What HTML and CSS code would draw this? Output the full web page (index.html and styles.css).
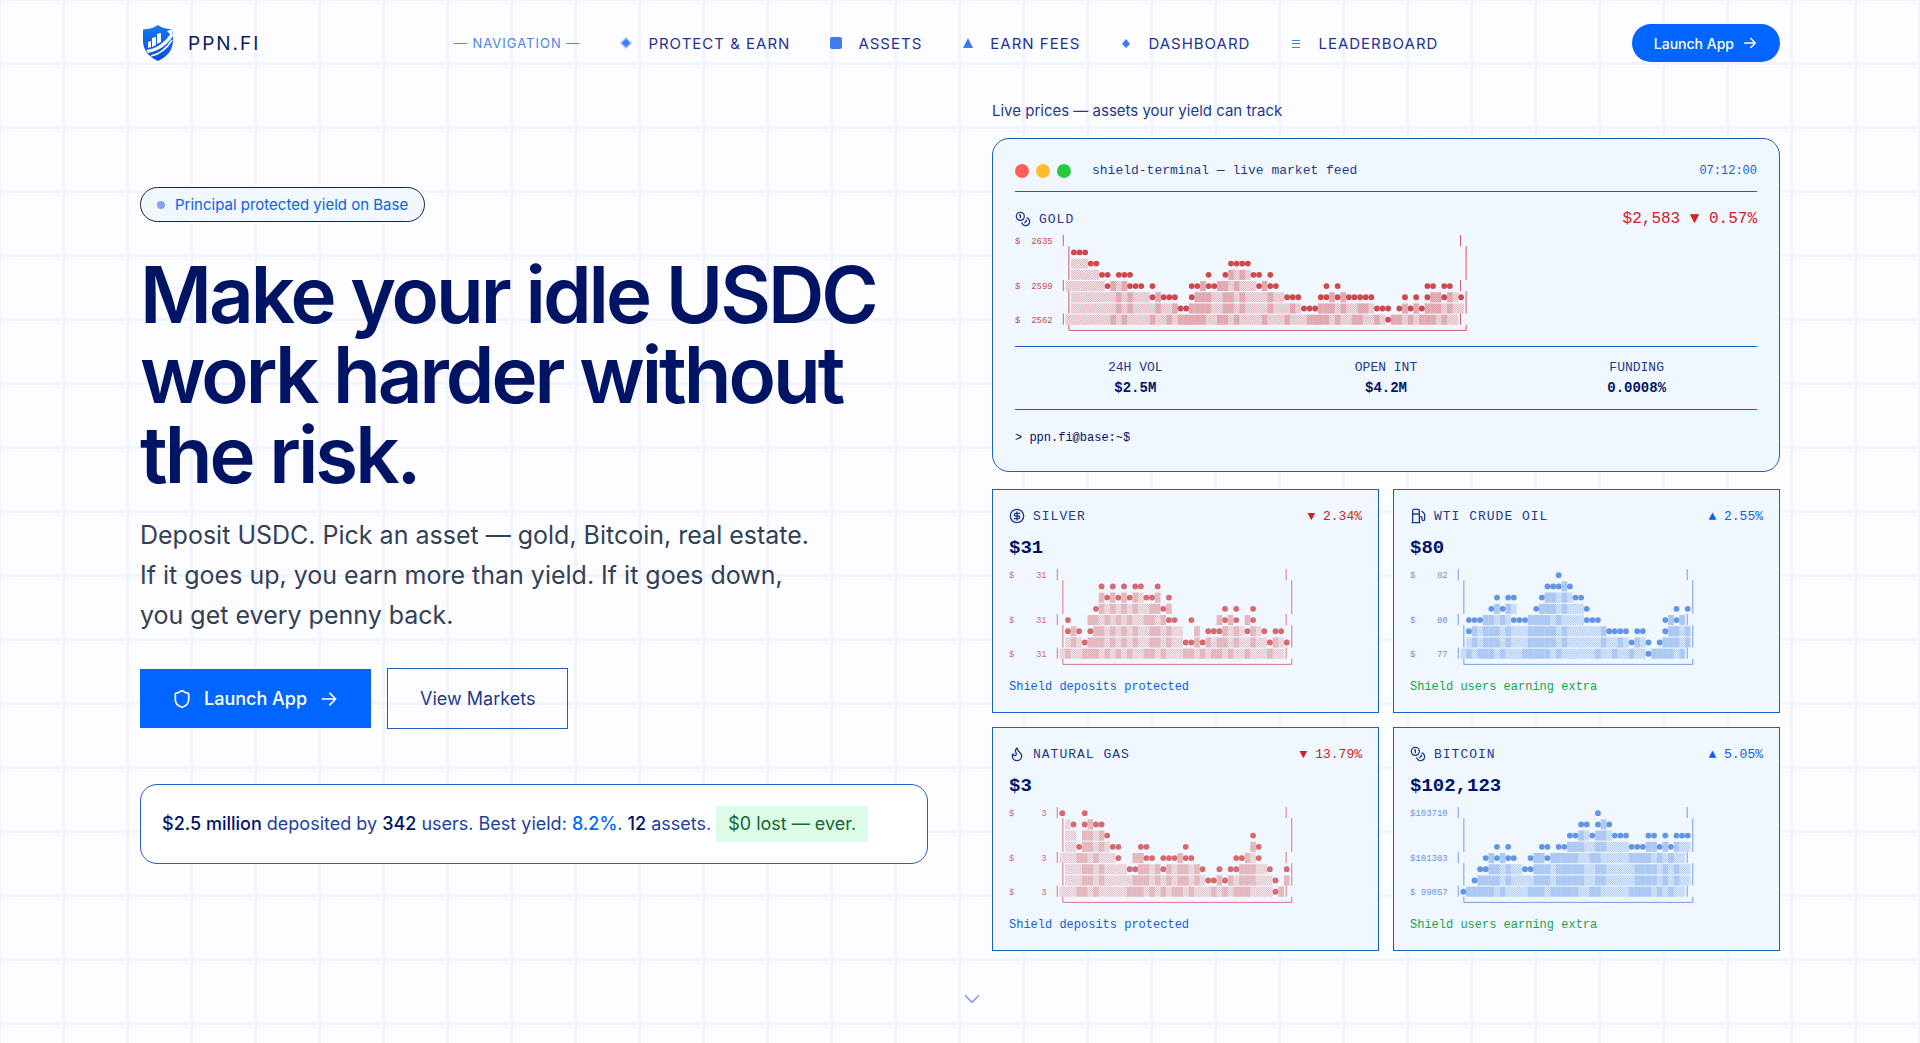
FILE: index.html
```
<!DOCTYPE html>
<html lang="en">
  <head>
    <meta charset="utf-8">
    <meta name="viewport" content="width=device-width, initial-scale=1.0">
    <title>PPN.FI</title>
    <link rel="stylesheet" href="styles.css">
  </head>
  <body>
    <!-- shared icons and chart fills -->
    <svg class="defs" aria-hidden="true">
      <defs>
        <symbol id="coins" viewBox="0 0 24 24">
          <circle cx="8" cy="8" r="6"/>
          <path d="M18.09 10.37A6 6 0 1 1 10.34 18M7 6h1v4M16.71 13.88l.7.71-2.82 2.82"/>
        </symbol>
        <symbol id="dollar" viewBox="0 0 24 24">
          <circle cx="12" cy="12" r="10"/>
          <path d="M16 8h-6a2 2 0 1 0 0 4h4a2 2 0 1 1 0 4H8M12 18V6"/>
        </symbol>
        <symbol id="fuel" viewBox="0 0 24 24">
          <path d="M3 22h12M4 9h10M14 22V4a2 2 0 0 0-2-2H6a2 2 0 0 0-2 2v18M14 13h2a2 2 0 0 1 2 2v2a2 2 0 0 0 4 0V9.83a2 2 0 0 0-.59-1.42L18 5"/>
        </symbol>
        <symbol id="flame" viewBox="0 0 24 24">
          <path d="M8.5 14.5A2.5 2.5 0 0 0 11 12c0-1.38-.5-2-1-3-1.07-2.14-.22-4.05 2-6 .5 2.5 2 4.9 4 6.5 2 1.6 3 3.5 3 5.5a7 7 0 1 1-14 0c0-1.15.43-2.29 1-3a2.5 2.5 0 0 0 2.5 2.5z"/>
        </symbol>
        <symbol id="arrow" viewBox="0 0 24 24">
          <path d="M4 12h16M13 5l7 7-7 7"/>
        </symbol>
        <symbol id="shield" viewBox="0 0 24 24">
          <path d="M20 13c0 5-3.5 7.5-7.66 8.95a1 1 0 0 1-.67-.01C7.5 20.5 4 18 4 13V6a1 1 0 0 1 1-1c2 0 4.5-1.2 6.24-2.72a1.17 1.17 0 0 1 1.52 0C14.51 3.81 17 5 19 5a1 1 0 0 1 1 1z"/>
        </symbol>
        <linearGradient id="logoFill" x1="0" y1="0" x2="0" y2="1">
          <stop offset="0" stop-color="#1478f0"/>
          <stop offset="1" stop-color="#0a50d8"/>
        </linearGradient>
        <pattern id="redLight" width="2" height="2" patternUnits="userSpaceOnUse">
          <path d="M0 0h1v1H0zM1 1h1v1H1z" fill="#d0484c" fill-opacity="0.48"/>
        </pattern>
        <pattern id="redMedium" width="2" height="2" patternUnits="userSpaceOnUse">
          <path d="M0 0h2v2H0z" fill="#d0484c" fill-opacity="0.34"/>
          <path d="M0 0h1v1H0zM1 1h1v1H1z" fill="#d0484c" fill-opacity="0.3"/>
        </pattern>
        <pattern id="blueLight" width="2" height="2" patternUnits="userSpaceOnUse">
          <path d="M0 0h1v1H0zM1 1h1v1H1z" fill="#3f7de0" fill-opacity="0.54"/>
        </pattern>
        <pattern id="blueMedium" width="2" height="2" patternUnits="userSpaceOnUse">
          <path d="M0 0h2v2H0z" fill="#3f7de0" fill-opacity="0.38"/>
          <path d="M0 0h1v1H0zM1 1h1v1H1z" fill="#3f7de0" fill-opacity="0.3"/>
        </pattern>
      </defs>
    </svg>

    <header class="header">
      <a class="logo" href="#">
        <svg width="32" height="36" viewBox="0 0 32 36">
          <path d="M16 0c4 3 9 4 15 4.500V16c0 9-6 16-15 20C7 32 1 25 1 16V4.500C7 4 12 3 16 0z" fill="url(#logoFill)"/>
          <path d="M6 17l3-1v6l-3 1zM10 13l4-1v8l-4 2zM15 9l4-1v9l-4 2z" fill="#fff"/>
          <path d="M4 25c11-1 19-8 26-18l1 4c-6 9-14 15-25 17z" fill="#fff"/>
          <path d="M25 6l6-2-1 7z" fill="#fff"/>
          <path d="M9 31c9-2 16-8 21-16" fill="none" stroke="#fff" stroke-width="1.500"/>
        </svg>
        PPN.FI
      </a>
      <nav class="nav">
        <span class="nav-label">— NAVIGATION —</span>
        <a href="#">
          <svg class="mark" viewBox="0 0 12 12"><path d="M6 0l6 6-6 6-6-6z" opacity="0.5"/><path d="M6 2l4 4-4 4-4-4z"/></svg>
          PROTECT &amp; EARN
        </a>
        <a href="#">
          <svg class="mark" viewBox="0 0 12 12"><rect x="0" y="0" width="12" height="12" rx="2"/></svg>
          ASSETS
        </a>
        <a href="#">
          <svg class="mark" viewBox="0 0 12 12"><path d="M6 1l5 10H1z"/></svg>
          EARN FEES
        </a>
        <a href="#">
          <svg class="mark" viewBox="0 0 12 12"><path d="M6 2l4 5-4 4-4-4z"/></svg>
          DASHBOARD
        </a>
        <a href="#">
          <svg class="mark" viewBox="0 0 12 12"><path d="M2 3h8v1H2zM2 6h8v1H2zM2 10h8v1H2z"/></svg>
          LEADERBOARD
        </a>
      </nav>
      <button class="btn-pill">Launch App <svg class="icon"><use href="#arrow"/></svg></button>
    </header>

    <main class="hero">
      <section class="intro">
        <p class="badge"><span class="badge-dot"></span>Principal protected yield on Base</p>
        <h1>Make your idle USDC work harder without the risk.</h1>
        <p class="lead">Deposit USDC. Pick an asset — gold, Bitcoin, real estate.<br>If it goes up, you earn more than yield. If it goes down,<br>you get every penny back.</p>
        <div class="actions">
          <button class="btn primary">
            <svg class="icon large"><use href="#shield"/></svg>
            Launch App
            <svg class="icon large"><use href="#arrow"/></svg>
          </button>
          <button class="btn outline">View Markets</button>
        </div>
        <p class="stats"><b>$2.5 million</b> deposited by <b>342</b> users. Best yield: <b class="blue">8.2%</b>. <b>12</b> assets. <span class="lost">$0 lost — ever.</span></p>
      </section>

      <section class="markets">
        <p class="markets-title">Live prices — assets your yield can track</p>
        <div class="terminal">
          <div class="terminal-bar">
            <span class="dot red"></span><span class="dot yellow"></span><span class="dot green"></span>
            <span class="terminal-name">shield-terminal — live market feed</span>
            <time>07:12:00</time>
          </div>
          <div class="asset-row gold-row">
            <svg class="icon"><use href="#coins"/></svg>
            <h2>GOLD</h2>
            <span class="quote down">$2,583 ▼ 0.57%</span>
          </div>
          <svg class="chart strong" data-chart="gold"></svg>
          <dl class="figures">
            <div><dt>24H VOL</dt><dd>$2.5M</dd></div>
            <div><dt>OPEN INT</dt><dd>$4.2M</dd></div>
            <div><dt>FUNDING</dt><dd>0.0008%</dd></div>
          </dl>
          <p class="prompt">&gt; ppn.fi@base:~$</p>
        </div>

        <div class="cards">
          <article class="card">
            <div class="asset-row">
              <svg class="icon"><use href="#dollar"/></svg>
              <h2>SILVER</h2>
              <span class="change down">▼ 2.34%</span>
            </div>
            <p class="price">$31</p>
            <svg class="chart" data-chart="silver"></svg>
            <p class="note">Shield deposits protected</p>
          </article>
          <article class="card">
            <div class="asset-row">
              <svg class="icon"><use href="#fuel"/></svg>
              <h2>WTI CRUDE OIL</h2>
              <span class="change up">▲ 2.55%</span>
            </div>
            <p class="price">$80</p>
            <svg class="chart" data-chart="oil"></svg>
            <p class="note extra">Shield users earning extra</p>
          </article>
          <article class="card">
            <div class="asset-row">
              <svg class="icon"><use href="#flame"/></svg>
              <h2>NATURAL GAS</h2>
              <span class="change down">▼ 13.79%</span>
            </div>
            <p class="price">$3</p>
            <svg class="chart" data-chart="gas"></svg>
            <p class="note">Shield deposits protected</p>
          </article>
          <article class="card">
            <div class="asset-row">
              <svg class="icon"><use href="#coins"/></svg>
              <h2>BITCOIN</h2>
              <span class="change up">▲ 5.05%</span>
            </div>
            <p class="price">$102,123</p>
            <svg class="chart" data-chart="bitcoin"></svg>
            <p class="note extra">Shield users earning extra</p>
          </article>
        </div>
      </section>
    </main>

    <a class="scroll" href="#" aria-label="Scroll down">
      <svg class="icon large" viewBox="0 0 24 24"><path d="M4 8l8 8 8-8"/></svg>
    </a>
    <script src="charts.js"></script>
  </body>
</html>
```
FILE: styles.css
```
* {
  box-sizing: border-box;
}
html {
  background-color: #fdfdff;
}
body {
  margin: 0;
  min-height: 100vh;
  color: #1e3a8a;
  font-family: Inter, "Liberation Sans", sans-serif;
  background-image:
    linear-gradient(#f0f4fe 3px, transparent 3px),
    linear-gradient(90deg, #f0f4fe 3px, transparent 3px);
  background-size: 64px 64px;
  background-position: -2px -2px;
}
h1, h2, p, dl, dd {
  margin: 0;
}
a {
  color: inherit;
  text-decoration: none;
}
button {
  font-family: inherit;
  cursor: pointer;
}
.defs {
  position: absolute;
  width: 0;
  height: 0;
}
.icon {
  width: 16px;
  height: 16px;
  flex: none;
  fill: none;
  stroke: currentColor;
  stroke-width: 2;
  stroke-linecap: round;
  stroke-linejoin: round;
}
.icon.large {
  width: 20px;
  height: 20px;
}

/* header */
.header {
  max-width: 1640px;
  height: 86px;
  margin: 0 auto;
  display: flex;
  align-items: center;
  justify-content: space-between;
}
.logo {
  display: flex;
  align-items: center;
  gap: 14px;
  padding-left: 2px;
  color: #0a1a5c;
  font-size: 19px;
  letter-spacing: 2px;
}
.nav {
  display: flex;
  align-items: center;
  gap: 40px;
  font-size: 15px;
  letter-spacing: 1px;
  color: #1f3390;
}
.nav a {
  display: flex;
  align-items: center;
  gap: 16px;
}
.nav-label {
  font-size: 13px;
  letter-spacing: 1px;
  color: #4a86e4;
}
.mark {
  width: 12px;
  height: 12px;
  fill: #3b7df0;
}
.btn-pill {
  display: flex;
  align-items: center;
  gap: 8px;
  height: 38px;
  padding: 0 22px;
  border: 0;
  border-radius: 19px;
  background-color: #0066ff;
  color: #fff;
  font-size: 14px;
  font-weight: 500;
}

/* hero */
.hero {
  max-width: 1640px;
  margin: 0 auto;
  padding-top: 14px;
  display: grid;
  grid-template-columns: 1fr 1fr;
  gap: 64px;
  align-items: center;
}
.badge {
  display: inline-flex;
  align-items: center;
  gap: 10px;
  height: 35px;
  padding: 0 16px;
  border: 1px solid #1c2438;
  border-radius: 18px;
  background-color: #f0f7ff;
  color: #1160dc;
  font-size: 15px;
}
.badge-dot {
  width: 8px;
  height: 8px;
  border-radius: 50%;
  background-color: #7fa5f3;
}
h1 {
  margin-top: 33px;
  color: #001466;
  font-size: 78px;
  line-height: 80px;
  font-weight: 600;
  letter-spacing: -3px;
}
.lead {
  margin-top: 20px;
  color: #334155;
  font-size: 25px;
  line-height: 40px;
}
.actions {
  display: flex;
  align-items: center;
  gap: 16px;
  margin-top: 33px;
}
.btn {
  display: flex;
  align-items: center;
  gap: 12px;
  font-size: 18px;
}
.primary {
  height: 59px;
  padding: 0 32px;
  border: 0;
  background-color: #0066ff;
  color: #fff;
  font-weight: 500;
}
.outline {
  height: 61px;
  padding: 0 32px;
  border: 1px solid #2160b8;
  background-color: transparent;
  color: #1e3a8a;
}
.stats {
  margin-top: 55px;
  padding: 21px;
  border: 1px solid #2160c4;
  border-radius: 17px;
  background-color: #fff;
  color: #2340a0;
  font-size: 18px;
  line-height: 36px;
}
.stats b {
  color: #001466;
  font-weight: 500;
}
.stats .blue {
  color: #0066ff;
}
.lost {
  display: inline-block;
  padding: 0 12px;
  background-color: #dcfce7;
  color: #166534;
}

/* markets */
.markets-title {
  font-size: 15px;
  line-height: 22px;
  margin-bottom: 16px;
}
.terminal, .card {
  border: 1px solid #1a5fc0;
  background-color: #f0f7ff;
  font-family: "Liberation Mono", monospace;
}
.terminal {
  border-radius: 17px;
  padding: 21px 22px 22px;
}
.terminal-bar {
  display: flex;
  align-items: center;
  gap: 7px;
  height: 32px;
  padding-bottom: 10px;
  border-bottom: 1px solid #1a5fc0;
}
.dot {
  width: 14px;
  height: 14px;
  border-radius: 50%;
}
.red {
  background-color: #ff5f57;
}
.yellow {
  background-color: #febc2e;
}
.green {
  background-color: #28c840;
}
.terminal-name {
  margin-left: 14px;
  font-size: 13px;
}
.terminal-bar time {
  margin-left: auto;
  color: #1a5fd8;
  font-size: 12px;
}
.asset-row {
  display: flex;
  align-items: center;
  gap: 8px;
  height: 20px;
}
.gold-row {
  margin-top: 17px;
}
.asset-row h2 {
  font-size: 13px;
  font-weight: 400;
  letter-spacing: 1px;
}
.quote {
  margin-left: auto;
  font-size: 16px;
}
.change {
  margin-left: auto;
  font-size: 13px;
}
.down {
  color: #d02028;
}
.up {
  color: #0a5ff0;
}
.chart {
  display: block;
  height: 101px;
  font-size: 8px;
  opacity: 0.8;
}
.chart.strong {
  margin-top: 6px;
  opacity: 1;
}
.figures {
  display: grid;
  grid-template-columns: repeat(3, 1fr);
  gap: 10px;
  margin-top: 10px;
  padding: 11px 0;
  border-top: 1px solid #1a5fc0;
  border-bottom: 1px solid #1a5fc0;
  text-align: center;
}
.figures dt {
  font-size: 13px;
  line-height: 20px;
}
.figures dd {
  color: #001466;
  font-size: 14px;
  line-height: 20px;
  font-weight: 700;
}
.prompt {
  margin-top: 17px;
  color: #001466;
  font-size: 12px;
  line-height: 22px;
}
.cards {
  display: grid;
  grid-template-columns: 1fr 1fr;
  gap: 14px;
  margin-top: 17px;
}
.card {
  padding: 16px;
}
.price {
  margin: 11px 0 10px;
  color: #001466;
  font-size: 19px;
  line-height: 22px;
  font-weight: 700;
}
.note {
  margin-top: 8px;
  color: #1160dc;
  font-size: 12px;
  line-height: 18px;
}
.extra {
  color: #16a34a;
}
.scroll {
  display: flex;
  justify-content: center;
  padding: 38px 0 31px 24px;
  color: #93a5de;
}
```
FILE: charts.js
```
// One digit per column: the row the point sits in, 0 is the top row.
// raised: columns drawn with the denser fill.
var COL = 5;
var ROW = 10;
var LEFT = 45;

var charts = {
  gold: {
    color: "red", labels: ["$  2635", "$  2599", "$  2562"],
    points: "1112233433344454555665443443222233434455566655454555556667656565445445",
    raised: [8, 10, 15, 18, 20, 21, 22, 23, 24, 27, 28, 30, 35, 39, 43, 44, 45, 46, 48, 51, 52, 55, 58, 59, 61, 63, 64, 65, 67]
  },
  silver: {
    color: "red", labels: ["$    31", "$    31", "$    31"],
    points: "5456531212121122132446646555343453456556",
    raised: [1, 4, 5, 6, 8, 10, 12, 15, 16, 18, 22, 23, 25, 27, 28, 30, 33, 37]
  },
  oil: {
    color: "blue", labels: ["$    82", "$    80", "$    77"],
    points: "5444323224443211101223444555565567654343",
    raised: [1, 3, 4, 5, 7, 11, 12, 13, 14, 15, 17, 24, 27, 30, 34, 35, 36, 37, 39]
  },
  gas: {
    color: "red", labels: ["$     3", "$     3", "$     3"],
    points: "0131011233455334454443445665655442345675",
    raised: [3, 4, 6, 12, 13, 14, 16, 18, 20, 21, 23, 27, 29, 31, 32, 33, 39]
  },
  bitcoin: {
    color: "blue", labels: ["$103710", "$101383", "$ 99057"],
    points: "7655434344554334332211210122233322323222",
    raised: [1, 2, 3, 4, 5, 7, 12, 13, 14, 16, 17, 18, 19, 20, 23, 24, 30, 31, 32, 33, 35, 37]
  }
};

function drawChart(svg) {
  var chart = charts[svg.dataset.chart];
  var cols = chart.points.length;
  var width = LEFT + (cols + 2) * COL;
  var stroke = chart.color == "red" ? "#d0484c" : "#3f7de0";
  var labelRows = [0, 4, 7];
  var out = "";

  for (var row = 0; row < 8; row++) {
    // rows with a label start one character further left
    var label = labelRows.indexOf(row);
    var x0 = label >= 0 ? LEFT : LEFT + COL;
    var y = row * ROW;
    if (label >= 0) {
      out += '<text x="0" y="' + (y + 8) + '" xml:space="preserve" fill="' + stroke + '">' + chart.labels[label] + '</text>';
    }
    out += '<path d="M' + (x0 - 2) + ' ' + y + 'v' + ROW + 'M' + (x0 + cols * COL + 2) + ' ' + y + 'v' + ROW + '" stroke="' + stroke + '" stroke-width="0.8"/>';
    for (var i = 0; i < cols; i++) {
      var point = Number(chart.points[i]);
      var x = x0 + i * COL;
      if (point == row) {
        out += '<circle cx="' + (x + 2.5) + '" cy="' + (y + 5.5) + '" r="2.6" fill="' + stroke + '"/>';
      }
      if (point < row) {
        var fill = chart.color + (chart.raised.indexOf(i) >= 0 ? "Medium" : "Light");
        out += '<rect x="' + x + '" y="' + (y + 1) + '" width="5" height="9" fill="url(#' + fill + ')"/>';
      }
    }
  }
  out += '<path d="M' + (LEFT + 3) + ' 80v5H' + (width - 3) + 'v-5" fill="none" stroke="' + stroke + '" stroke-width="0.8"/>';

  svg.setAttribute("viewBox", "0 0 " + width + " 90");
  svg.innerHTML = out;
}

document.querySelectorAll(".chart").forEach(drawChart);
```
